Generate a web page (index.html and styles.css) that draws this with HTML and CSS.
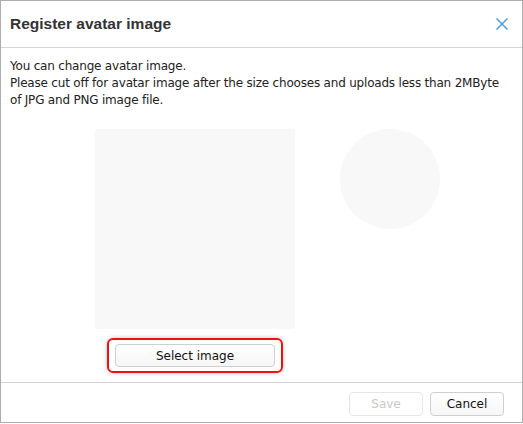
FILE: index.html
```html
<!DOCTYPE html>
<html lang="en">
<head>
  <meta charset="UTF-8">
  <title>Register avatar image</title>
  <link rel="stylesheet" href="styles.css">
</head>
<body>

  <!-- DIALOG -->
  <div class="dialog">
    <div class="dialog-header">
      <h1>Register avatar image</h1>
      <a class="close" title="Close">
        <svg width="12" height="12" viewBox="0 0 12 12">
          <path d="M0.5 0.5 L11.5 11.5 M11.5 0.5 L0.5 11.5" stroke="#4b9be0" stroke-width="1.5" fill="none"/>
        </svg>
      </a>
    </div>

    <div class="dialog-body">
      <p class="intro">
        You can change avatar image.<br>
        Please cut off for avatar image after the size chooses and uploads less than 2MByte of JPG and PNG image file.
      </p>

      <div class="preview">
        <div class="crop-col">
          <div class="crop-area"></div>
          <div class="highlight">
            <button class="btn select-btn">Select image</button>
          </div>
        </div>
        <div class="avatar-circle"></div>
      </div>
    </div>

    <div class="dialog-footer">
      <button class="btn" disabled>Save</button>
      <button class="btn">Cancel</button>
    </div>
  </div>

</body>
</html>
```

FILE: styles.css
```css
/* Page: the dialog fills the whole window */
body {
  margin: 0;
  padding: 0;
  background: #ffffff;
  font-family: 'DejaVu Sans', 'Liberation Sans', sans-serif;
  color: #222222;
}

/* DIALOG FRAME */
.dialog {
  width: 521px;
  height: 421px;
  border: 1px solid #adadad;
  display: flex;
  flex-direction: column;
  background: #fff;
}

/* Header with title and close cross */
.dialog-header {
  height: 46px;
  border-bottom: 1px solid #d4d4d4;
  display: flex;
  align-items: center;
  justify-content: space-between;
  padding: 0 14px 0 9px;
}

.dialog-header h1 {
  margin: 0;
  font-family: 'Liberation Sans', Arial, sans-serif;
  font-size: 15.5px;
  font-weight: bold;
  color: #333333;
}

.close {
  display: flex;
  cursor: pointer;
}

/* Body */
.dialog-body {
  flex: 1;
  padding: 0 9px;
}

.intro {
  margin: 10px 0 0 0;
  font-size: 12px;
  line-height: 17px;
  letter-spacing: -0.2px;
}

.preview {
  display: flex;
  align-items: flex-start;
  gap: 45px;
  margin: 20px 0 0 85px;
}

.crop-col {
  display: flex;
  flex-direction: column;
  align-items: center;
}

.crop-area {
  width: 200px;
  height: 200px;
  background: #f8f8f8;
  border-radius: 3px;
}

.avatar-circle {
  width: 100px;
  height: 100px;
  border-radius: 50%;
  background: #f8f8f8;
}

/* Red marker round the "Select image" button */
.highlight {
  margin-top: 9px;
  padding: 4px 6px;
  border: 2px solid #ee1111;
  border-radius: 6px;
  box-shadow: 0 0 4px rgba(0, 0, 0, 0.25);
  display: flex;
}

/* Buttons */
.btn {
  font-family: 'DejaVu Sans', 'Liberation Sans', sans-serif;
  font-size: 12px;
  color: #111111;
  background: linear-gradient(to bottom, #ffffff, #f6f6f6);
  border: 1px solid #cfcfcf;
  border-radius: 4px;
  height: 24px;
  width: 74px;
  padding: 0;
  cursor: pointer;
}

.btn:disabled {
  color: #c8c8c8;
  border-color: #e6e6e6;
  background: #ffffff;
  cursor: default;
}

.select-btn {
  width: 160px;
  height: 23px;
}

/* Footer */
.dialog-footer {
  height: 40px;
  border-top: 1px solid #d4d4d4;
  display: flex;
  justify-content: flex-end;
  align-items: center;
  gap: 7px;
  padding: 2px 18px 0 0;
  box-sizing: border-box;
}
```
